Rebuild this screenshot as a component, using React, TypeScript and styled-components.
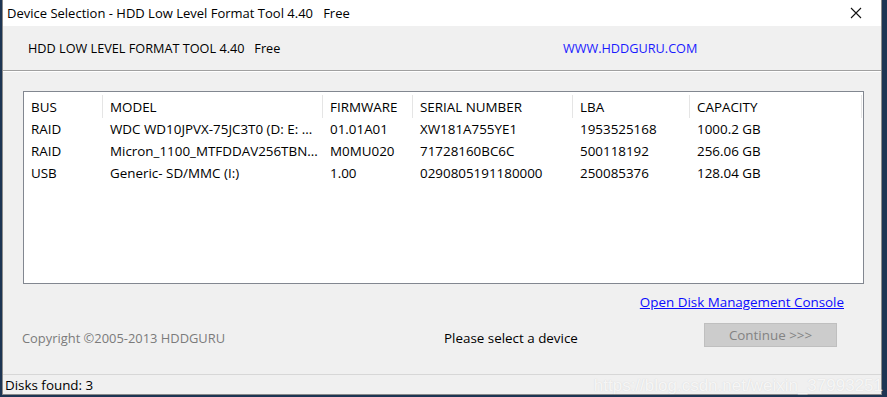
import styled, { createGlobalStyle } from 'styled-components';

const GlobalStyle = createGlobalStyle`
  html, body {
    margin: 0;
    padding: 0;
    background: #1d3553;
  }
  body {
    font-family: 'Open Sans', 'Noto Sans', sans-serif;
    font-size: 13.4px;
  }
`;

const columns = [
  { title: 'BUS', width: 79 },
  { title: 'MODEL', width: 220 },
  { title: 'FIRMWARE', width: 90 },
  { title: 'SERIAL NUMBER', width: 160 },
  { title: 'LBA', width: 117 },
  { title: 'CAPACITY', width: 172 },
];

const disks = [
  ['RAID', 'WDC WD10JPVX-75JC3T0 (D: E: ...', '01.01A01', 'XW181A755YE1', '1953525168', '1000.2 GB'],
  ['RAID', 'Micron_1100_MTFDDAV256TBN...', 'M0MU020', '71728160BC6C', '500118192', '256.06 GB'],
  ['USB', 'Generic- SD/MMC (I:)', '1.00', '0290805191180000', '250085376', '128.04 GB'],
];

const gridCols = columns.map((c) => `${c.width}px`).join(' ') + ' 1fr';

export default function App() {
  return (
    <>
      <GlobalStyle />
      <Desktop>
        <Window>
          <TitleBar>
            <TitleText>Device Selection - HDD Low Level Format Tool 4.40&nbsp;&nbsp;&nbsp;Free</TitleText>
            <CloseButton aria-label='close'>
              <svg width='12' height='12' viewBox='0 0 12 12'>
                <path d='M1 1 L11 11 M11 1 L1 11' stroke='#111' strokeWidth='1.1' fill='none' />
              </svg>
            </CloseButton>
          </TitleBar>
          <Header>
            <ProductName>HDD LOW LEVEL FORMAT TOOL 4.40&nbsp;&nbsp; Free</ProductName>
            <SiteLink>WWW.HDDGURU.COM</SiteLink>
          </Header>
          <Body>
            <DiskList>
              <HeaderRow style={{ gridTemplateColumns: gridCols }}>
                {columns.map((c) => (
                  <HeadCell key={c.title}>{c.title}</HeadCell>
                ))}
                <span />
              </HeaderRow>
              {disks.map((d, i) => (
                <DiskRow key={i} style={{ gridTemplateColumns: gridCols }}>
                  {d.map((v, j) => (
                    <Cell key={j}>{v}</Cell>
                  ))}
                </DiskRow>
              ))}
            </DiskList>
            <LinkRow>
              <ConsoleLink>Open Disk Management Console</ConsoleLink>
            </LinkRow>
            <ActionRow>
              <Copyright>Copyright ©2005-2013 HDDGURU</Copyright>
              <Prompt>Please select a device</Prompt>
              <ContinueButton disabled>Continue &gt;&gt;&gt;</ContinueButton>
            </ActionRow>
          </Body>
          <StatusBar>
            <span>Disks found: 3</span>
            <Watermark>https://blog.csdn.net/weixin_37993251</Watermark>
          </StatusBar>
        </Window>
      </Desktop>
    </>
  );
}

const Desktop = styled.div`
  width: 887px;
  height: 397px;
  padding-left: 2px;
  box-sizing: border-box;
  overflow: hidden;
`;

const Window = styled.div`
  width: 880px;
  height: 395px;
  box-sizing: border-box;
  border: 1px solid #8a8a8a;
  border-top: none;
  background: #f0f0f0;
  display: flex;
  flex-direction: column;
`;

const TitleBar = styled.div`
  height: 26px;
  flex: none;
  background: #fff;
  display: flex;
  align-items: center;
  justify-content: space-between;
  padding-left: 4px;
`;

const TitleText = styled.span`
  color: #000;
  font-size: 13px;
  white-space: pre;
`;

const CloseButton = styled.div`
  width: 46px;
  height: 26px;
  display: flex;
  align-items: center;
  justify-content: center;
  margin-right: 2px;
`;

const Header = styled.div`
  height: 44px;
  flex: none;
  display: flex;
  align-items: center;
  border-bottom: 1px solid #a0a0a0;
  box-shadow: 0 1px 0 #fff;
  padding-left: 25px;
  font-size: 12.7px;
`;

const ProductName = styled.span`
  width: 535px;
  color: #000;
`;

const SiteLink = styled.span`
  color: #1a1aff;
`;

const Body = styled.div`
  flex: 1;
  display: flex;
  flex-direction: column;
  padding: 20px 17px 0 20px;
`;

const DiskList = styled.div`
  height: 193px;
  box-sizing: border-box;
  border: 1px solid #828790;
  background: #fff;
`;

const HeaderRow = styled.div`
  display: grid;
  height: 26px;
  box-sizing: border-box;
  padding-top: 3px;
`;

const HeadCell = styled.div`
  display: flex;
  align-items: center;
  padding-left: 7px;
  border-right: 1px solid #e5e5e5;
  color: #000;
`;

const DiskRow = styled.div`
  display: grid;
  height: 22px;
`;

const Cell = styled.div`
  display: flex;
  align-items: center;
  padding-left: 7px;
  white-space: nowrap;
  overflow: hidden;
  color: #000;
`;

const LinkRow = styled.div`
  display: flex;
  justify-content: flex-end;
  padding-right: 20px;
  margin-top: 9px;
  height: 18px;
  align-items: center;
`;

const ConsoleLink = styled.span`
  color: #0a0aff;
  text-decoration: underline;
  cursor: pointer;
`;

const ActionRow = styled.div`
  display: flex;
  align-items: center;
  margin-top: 15px;
  height: 24px;
`;

const Copyright = styled.span`
  width: 422px;
  margin-left: -1px;
  font-size: 12.9px;
  color: #7b7b7b;
`;

const Prompt = styled.span`
  width: 260px;
  color: #000;
`;

const ContinueButton = styled.button`
  width: 133px;
  height: 24px;
  margin-top: -6px;
  background: #cccccc;
  border: 1px solid #bfbfbf;
  color: #838383;
  font-family: inherit;
  font-size: 13.4px;
  padding: 0;
`;

const StatusBar = styled.div`
  position: relative;
  height: 19px;
  flex: none;
  border-top: 1px solid #d7d7d7;
  display: flex;
  align-items: center;
  padding-left: 2px;
  color: #000;
`;

const Watermark = styled.span`
  position: absolute;
  right: -2px;
  top: 1px;
  font-family: 'Liberation Sans', sans-serif;
  font-size: 17px;
  color: rgba(255, 255, 255, 0.8);
  text-shadow: 0 0 1px rgba(180, 180, 180, 0.5);
  white-space: nowrap;
`;
